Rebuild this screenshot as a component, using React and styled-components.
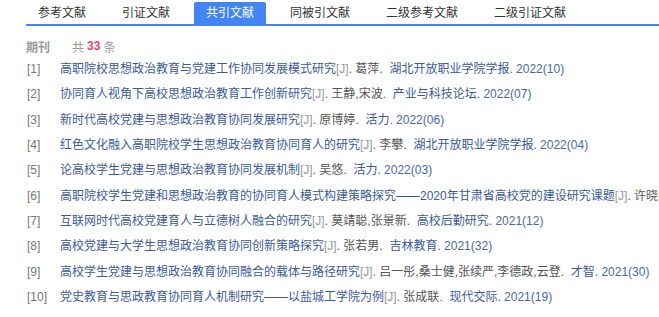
import React, { useState } from 'react'
import styled, { createGlobalStyle } from 'styled-components'

const tabs = ['参考文献', '引证文献', '共引文献', '同被引文献', '二级参考文献', '二级引证文献']

const papers = [
  { title: '高职院校思想政治教育与党建工作协同发展模式研究', authors: '葛萍', journal: '湖北开放职业学院学报', year: '2022(10)' },
  { title: '协同育人视角下高校思想政治教育工作创新研究', authors: '王静,宋波', journal: '产业与科技论坛', year: '2022(07)' },
  { title: '新时代高校党建与思想政治教育协同发展研究', authors: '原博婷', journal: '活力', year: '2022(06)' },
  { title: '红色文化融入高职院校学生思想政治教育协同育人的研究', authors: '李攀', journal: '湖北开放职业学院学报', year: '2022(04)' },
  { title: '论高校学生党建与思想政治教育协同发展机制', authors: '吴悠', journal: '活力', year: '2022(03)' },
  { title: '高职院校学生党建和思想政治教育的协同育人模式构建策略探究——2020年甘肃省高校党的建设研究课题', authors: '许晓娟', journal: '甘肃教育研究', year: '2021(14)' },
  { title: '互联网时代高校党建育人与立德树人融合的研究', authors: '莫靖聪,张景新', journal: '高校后勤研究', year: '2021(12)' },
  { title: '高校党建与大学生思想政治教育协同创新策略探究', authors: '张若男', journal: '吉林教育', year: '2021(32)' },
  { title: '高校学生党建与思想政治教育协同融合的载体与路径研究', authors: '吕一彤,桑士健,张续严,李德政,云登', journal: '才智', year: '2021(30)' },
  { title: '党史教育与思政教育协同育人机制研究——以盐城工学院为例', authors: '张成联', journal: '现代交际', year: '2021(19)' },
]

const GlobalStyle = createGlobalStyle`
  html, body {
    margin: 0;
    padding: 0;
    background: #fff;
    overflow: hidden;
  }
  body {
    font-family: "Liberation Sans", "Noto Sans CJK SC", sans-serif;
    font-size: 12px;
  }
`

const Page = styled.div`
  padding: 2px 0 0 26px;
  width: 633px;
`

const TabBar = styled.div`
  display: flex;
  gap: 12px;
  border-bottom: 2px solid #4285f4;
`

const Tab = styled.div`
  height: 22px;
  line-height: 22px;
  padding: 0 12px;
  border-radius: 2px 2px 0 0;
  color: ${(p) => (p.$active ? '#fff' : '#333')};
  background: ${(p) => (p.$active ? '#4285f4' : 'transparent')};
  cursor: pointer;
  white-space: nowrap;
`

const Summary = styled.div`
  display: flex;
  align-items: center;
  height: 20px;
  margin-top: 10px;
  color: #999;
`

const Label = styled.span`
  font-weight: bold;
  margin-right: 22px;
`

const Count = styled.b`
  color: #e5457a;
  margin: 0 3px;
`

const List = styled.ul`
  list-style: none;
  margin: 0;
  padding: 1px 0 0;
`

const Row = styled.li`
  display: flex;
  height: 25.33px;
  line-height: 25.33px;
  white-space: nowrap;
`

const Num = styled.span`
  width: 33px;
  flex-shrink: 0;
  padding-left: 1px;
  color: #777;
`

const Title = styled.a`
  color: #3b5a9a;
  text-decoration: none;
`

const Mark = styled.span`
  color: #999;
`

const Authors = styled.span`
  color: #555;
`

const Journal = styled.a`
  color: #3b5a9a;
  text-decoration: none;
`

const Year = styled.a`
  color: #4a68a8;
  text-decoration: none;
`

export default function App() {
  const [active, setActive] = useState(2)

  return (
    <Page>
      <GlobalStyle />
      <TabBar>
        {tabs.map((t, i) => (
          <Tab key={t} $active={i === active} onClick={() => setActive(i)}>
            {t}
          </Tab>
        ))}
      </TabBar>
      <Summary>
        <Label>期刊</Label>
        共<Count>33</Count>条
      </Summary>
      <List>
        {papers.map((p, i) => (
          <Row key={i}>
            <Num>[{i + 1}]</Num>
            <Title>{p.title}</Title>
            <Mark>[J]</Mark>
            <Authors>. {p.authors}.&nbsp;&nbsp;</Authors>
            <Journal>{p.journal}. </Journal>
            <Year>&nbsp;{p.year}</Year>
          </Row>
        ))}
      </List>
    </Page>
  )
}
